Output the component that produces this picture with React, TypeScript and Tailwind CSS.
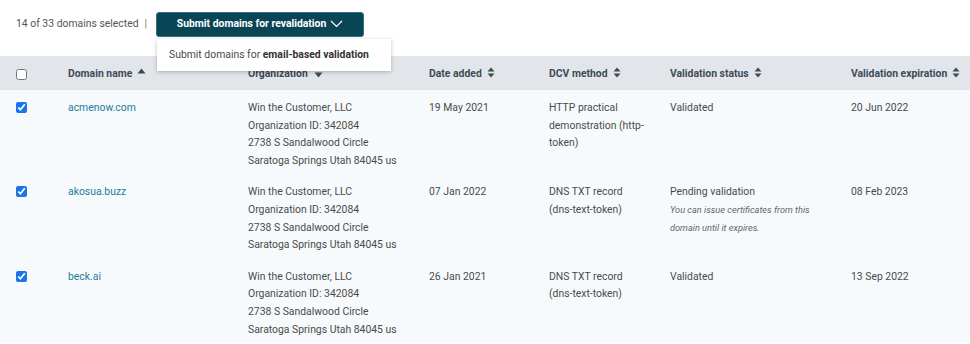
// Domains table with bulk revalidation menu
const rows = [
  {
    domain: "acmenow.com",
    added: "19 May 2021",
    dcv: "HTTP practical demonstration (http-token)",
    status: "Validated",
    note: "",
    expires: "20 Jun 2022",
  },
  {
    domain: "akosua.buzz",
    added: "07 Jan 2022",
    dcv: "DNS TXT record (dns-text-token)",
    status: "Pending validation",
    note: "You can issue certificates from this domain until it expires.",
    expires: "08 Feb 2023",
  },
  {
    domain: "beck.ai",
    added: "26 Jan 2021",
    dcv: "DNS TXT record (dns-text-token)",
    status: "Validated",
    note: "",
    expires: "13 Sep 2022",
  },
];

function SortBoth() {
  return (
    <svg width="8" height="11" viewBox="0 0 8 11" className="ml-[5px] inline-block align-[-1px]">
      <path d="M4 0.5 L7.5 4.5 H0.5 Z" fill="#3d4b57" />
      <path d="M4 10.5 L7.5 6.5 H0.5 Z" fill="#3d4b57" />
    </svg>
  );
}

function SortUp() {
  return (
    <svg width="9" height="6" viewBox="0 0 9 6" className="ml-[5px] mb-[6px] inline-block">
      <path d="M4.5 0.5 L8.5 5.5 H0.5 Z" fill="#3d4b57" />
    </svg>
  );
}

function SortDown() {
  return (
    <svg width="9" height="6" viewBox="0 0 9 6" className="ml-[6px] mb-[-1px] inline-block">
      <path d="M4.5 5.5 L8.5 0.5 H0.5 Z" fill="#3d4b57" />
    </svg>
  );
}

const th = "text-left font-bold text-[10.4px] text-[#3d4b57] h-[34px] align-middle pt-[2px] pr-4 whitespace-nowrap";
const td = "align-top pt-[9px] pb-[5px] pr-4";

export default function App() {
  return (
    <div className="relative w-[970px] h-[344px] overflow-hidden bg-white font-['Roboto',sans-serif] text-[10.4px] text-[#4a4a4a]">
      {/* Barra de selección */}
      <div className="flex items-center h-[56px] pb-[8px] pl-4">
        <span className="text-[#555]">14 of 33 domains selected</span>
        <span className="ml-[6px] text-[#777]">|</span>
        <button className="ml-[9px] flex items-center h-[25px] w-[208px] justify-center gap-[4px] rounded-[3px] border border-[#2a7486] bg-[#0a4555] text-white font-bold text-[10.4px]">
          Submit domains for revalidation
          <svg width="13" height="8" viewBox="0 0 13 8">
            <path d="M1 1 L6.5 6.5 L12 1" fill="none" stroke="white" strokeWidth="1.2" />
          </svg>
        </button>
      </div>

      {/* Menú desplegable */}
      <div className="absolute left-[157px] top-[39px] z-10 w-[234px] h-[32px] flex items-center pl-3 whitespace-nowrap bg-white shadow-[0_1px_4px_rgba(0,0,0,0.25)] text-[#4a4a4a]">
        Submit domains for&nbsp;<span className="font-bold text-[#333]">email-based validation</span>
      </div>

      <table className="w-full table-fixed border-collapse leading-[17.6px]">
        <colgroup>
          <col className="w-[68px]" />
          <col className="w-[180px]" />
          <col className="w-[181px]" />
          <col className="w-[120px]" />
          <col className="w-[121px]" />
          <col className="w-[181px]" />
          <col />
        </colgroup>
        <thead>
          <tr className="bg-[#e2e6ea]">
            <th className={th + " pl-4"}>
              <input type="checkbox" className="m-0 block w-[11px] h-[11px]" readOnly />
            </th>
            <th className={th}>
              Domain name
              <SortUp />
            </th>
            <th className={th}>
              Organization
              <SortDown />
            </th>
            <th className={th}>
              Date added
              <SortBoth />
            </th>
            <th className={th}>
              DCV method
              <SortBoth />
            </th>
            <th className={th}>
              Validation status
              <SortBoth />
            </th>
            <th className={th}>
              Validation expiration
              <SortBoth />
            </th>
          </tr>
        </thead>
        <tbody>
          {rows.map((r) => (
            <tr key={r.domain} className="bg-[#f7fafc] h-[84px]">
              <td className={td + " pl-4"}>
                <input type="checkbox" checked readOnly className="m-0 mt-[3px] block w-[11px] h-[11px] accent-[#1a73e8]" />
              </td>
              <td className={td}>
                <a className="text-[#237a9a]">{r.domain}</a>
              </td>
              <td className={td}>
                <div>Win the Customer, LLC</div>
                <div>Organization ID: 342084</div>
                <div>2738 S Sandalwood Circle</div>
                <div>Saratoga Springs Utah 84045 us</div>
              </td>
              <td className={td}>{r.added}</td>
              <td className={td + " pr-[22px]"}>{r.dcv}</td>
              <td className={td + " pr-[36px]"}>
                <div>{r.status}</div>
                {r.note && <div className="italic text-[9.2px] text-[#666]">{r.note}</div>}
              </td>
              <td className={td}>{r.expires}</td>
            </tr>
          ))}
        </tbody>
      </table>
    </div>
  );
}
